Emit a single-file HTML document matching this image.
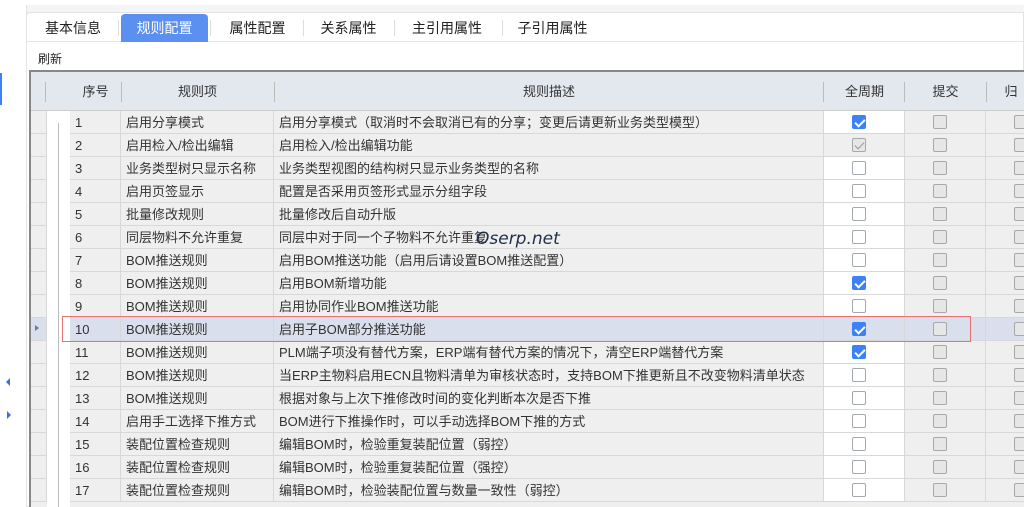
<!DOCTYPE html><html><head><meta charset="utf-8"><style>
*{margin:0;padding:0;box-sizing:border-box}
html,body{width:1024px;height:507px;overflow:hidden}
body{background:#f4f5f7;font-family:"Liberation Sans","Noto Sans CJK SC",sans-serif;font-size:12px;color:#333;position:relative}
.a{position:absolute}
.tab{position:absolute;top:14px;height:28px;line-height:28px;font-size:14px;color:#222;text-align:center}
.sep{position:absolute;top:20px;width:1px;height:16px;background:#ddd}
.row{position:absolute;left:30px;width:994px;height:23px}
.c{position:absolute;top:0;height:23px;line-height:23px;border-right:1px solid #d8d8d8;border-bottom:1px solid #d8d8d8;background:#efefef;padding-left:5px;white-space:nowrap;overflow:hidden;font-size:13px;color:#333}
.cb{position:absolute;width:14px;height:14px;border:1px solid #a4a8b0;border-radius:2px;background:#fff;top:4px}
.cb.g{background:#e6e6e6;border-color:#a8a8a8}
.cb.k{background:#3c82f6;border-color:#3c82f6}
.cb.k:after{content:"";position:absolute;left:4px;top:1px;width:4px;height:8px;border:solid #fff;border-width:0 2px 2px 0;transform:rotate(45deg)}
.cb.d:after{content:"";position:absolute;left:4px;top:1px;width:4px;height:8px;border:solid #999;border-width:0 1px 1px 0;transform:rotate(45deg)}
.h{position:absolute;top:72px;height:39px;line-height:39px;text-align:center;font-size:13px;color:#333}
.hs{position:absolute;top:82px;width:1px;height:20px;background:#bbb}
</style></head><body>
<div class="a" style="left:0;top:0;width:1024px;height:5px;background:#fff"></div>
<div class="a" style="left:0;top:5px;width:27px;height:502px;background:#fff;border-right:1px solid #e3e3e3"></div>
<div class="a" style="left:0;top:73px;width:2px;height:32px;background:#3c82f6"></div>
<div class="a" style="left:6px;top:378px;width:0;height:0;border-top:4px solid transparent;border-bottom:4px solid transparent;border-right:4px solid #3c6fe0"></div>
<div class="a" style="left:7px;top:411px;width:0;height:0;border-top:4px solid transparent;border-bottom:4px solid transparent;border-left:4px solid #3c6fe0"></div>
<div class="a" style="left:26px;top:12px;width:998px;height:495px;background:#fff;border:1px solid #e3e3e3;border-radius:4px 0 0 0"></div>
<div class="a" style="left:26px;top:41px;width:998px;height:1px;background:#e5e5e5"></div>
<div class="tab" style="left:36px;width:74px">基本信息</div>
<div class="sep" style="left:118px"></div>
<div class="tab" style="left:121px;width:87px;background:#5b8ff0;color:#fff;border-radius:4px 4px 0 0">规则配置</div>
<div class="sep" style="left:210px"></div>
<div class="tab" style="left:215px;width:85px">属性配置</div>
<div class="sep" style="left:303px"></div>
<div class="tab" style="left:306px;width:85px">关系属性</div>
<div class="sep" style="left:394px"></div>
<div class="tab" style="left:397px;width:100px">主引用属性</div>
<div class="sep" style="left:502px"></div>
<div class="tab" style="left:505px;width:95px">子引用属性</div>
<div class="a" style="left:38px;top:50px;font-size:12px;color:#222">刷新</div>
<div class="a" style="left:29px;top:70px;width:995px;height:437px;background:#efefef;border-left:2px solid #888;border-top:2px solid #888"></div>
<div class="a" style="left:31px;top:72px;width:993px;height:39px;background:#e3e7ee;border-bottom:1px solid #ccc"></div>
<div class="hs" style="left:45px"></div>
<div class="h" style="left:70px;width:51px">序号</div><div class="hs" style="left:121px"></div>
<div class="h" style="left:121px;width:153px">规则项</div><div class="hs" style="left:274px"></div>
<div class="h" style="left:274px;width:550px">规则描述</div><div class="hs" style="left:823px"></div>
<div class="h" style="left:824px;width:81px">全周期</div><div class="hs" style="left:904px"></div>
<div class="h" style="left:905px;width:81px">提交</div><div class="hs" style="left:986px"></div>
<div class="h" style="left:986px;width:50px">归</div>
<div id="rows"></div>
<div class="a" style="left:47px;top:111px;width:23px;height:396px;background:#fff"></div>
<div class="a" style="left:58px;top:123px;width:1px;height:384px;background:#bbb"></div>
<div class="a" style="left:35px;top:325px;width:0;height:0;border-top:3px solid transparent;border-bottom:3px solid transparent;border-left:4px solid #6a7a99"></div>
<div class="a" style="left:62px;top:316px;width:909px;height:26px;border:1px solid #e57373"></div>
<div class="a" style="left:476px;top:229px;font-size:17px;font-style:italic;color:#1f3048;font-family:'DejaVu Sans',sans-serif">Oserp.net</div>
<script>
var d=[["1","启用分享模式","启用分享模式（取消时不会取消已有的分享；变更后请更新业务类型模型）","k"],
["2","启用检入/检出编辑","启用检入/检出编辑功能","d"],
["3","业务类型树只显示名称","业务类型视图的结构树只显示业务类型的名称",""],
["4","启用页签显示","配置是否采用页签形式显示分组字段",""],
["5","批量修改规则","批量修改后自动升版",""],
["6","同层物料不允许重复","同层中对于同一个子物料不允许重复",""],
["7","BOM推送规则","启用BOM推送功能（启用后请设置BOM推送配置）",""],
["8","BOM推送规则","启用BOM新增功能","k"],
["9","BOM推送规则","启用协同作业BOM推送功能",""],
["10","BOM推送规则","启用子BOM部分推送功能","k"],
["11","BOM推送规则","PLM端子项没有替代方案，ERP端有替代方案的情况下，清空ERP端替代方案","k"],
["12","BOM推送规则","当ERP主物料启用ECN且物料清单为审核状态时，支持BOM下推更新且不改变物料清单状态",""],
["13","BOM推送规则","根据对象与上次下推修改时间的变化判断本次是否下推",""],
["14","启用手工选择下推方式","BOM进行下推操作时，可以手动选择BOM下推的方式",""],
["15","装配位置检查规则","编辑BOM时，检验重复装配位置（弱控）",""],
["16","装配位置检查规则","编辑BOM时，检验重复装配位置（强控）",""],
["17","装配位置检查规则","编辑BOM时，检验装配位置与数量一致性（弱控）",""]];
var h="";
d.forEach(function(r,i){var t=111+23*i;var s=i==9;var bg=s?"background:#dadfee;":"";
h+='<div class="row" style="top:'+t+'px">';
h+='<div class="c" style="left:1px;width:16px;'+bg+'"></div>';
h+='<div class="c" style="left:40px;width:51px;'+bg+'">'+r[0]+'</div>';
h+='<div class="c" style="left:91px;width:153px;'+bg+'">'+r[1]+'</div>';
h+='<div class="c" style="left:244px;width:550px;'+bg+'">'+r[2]+'</div>';
var w=(r[3]=="d")?"background:#efefef;":"background:#fff;";
h+='<div class="c" style="left:794px;width:81px;'+(s?bg:w)+'"><div class="cb '+(r[3]=="d"?"g d":r[3])+'" style="left:28px"></div></div>';
h+='<div class="c" style="left:875px;width:81px;'+bg+'"><div class="cb g" style="left:28px"></div></div>';
h+='<div class="c" style="left:956px;width:40px;'+bg+'"><div class="cb g" style="left:28px"></div></div>';
h+='</div>';});
document.getElementById("rows").innerHTML=h;
</script>
</body></html>
